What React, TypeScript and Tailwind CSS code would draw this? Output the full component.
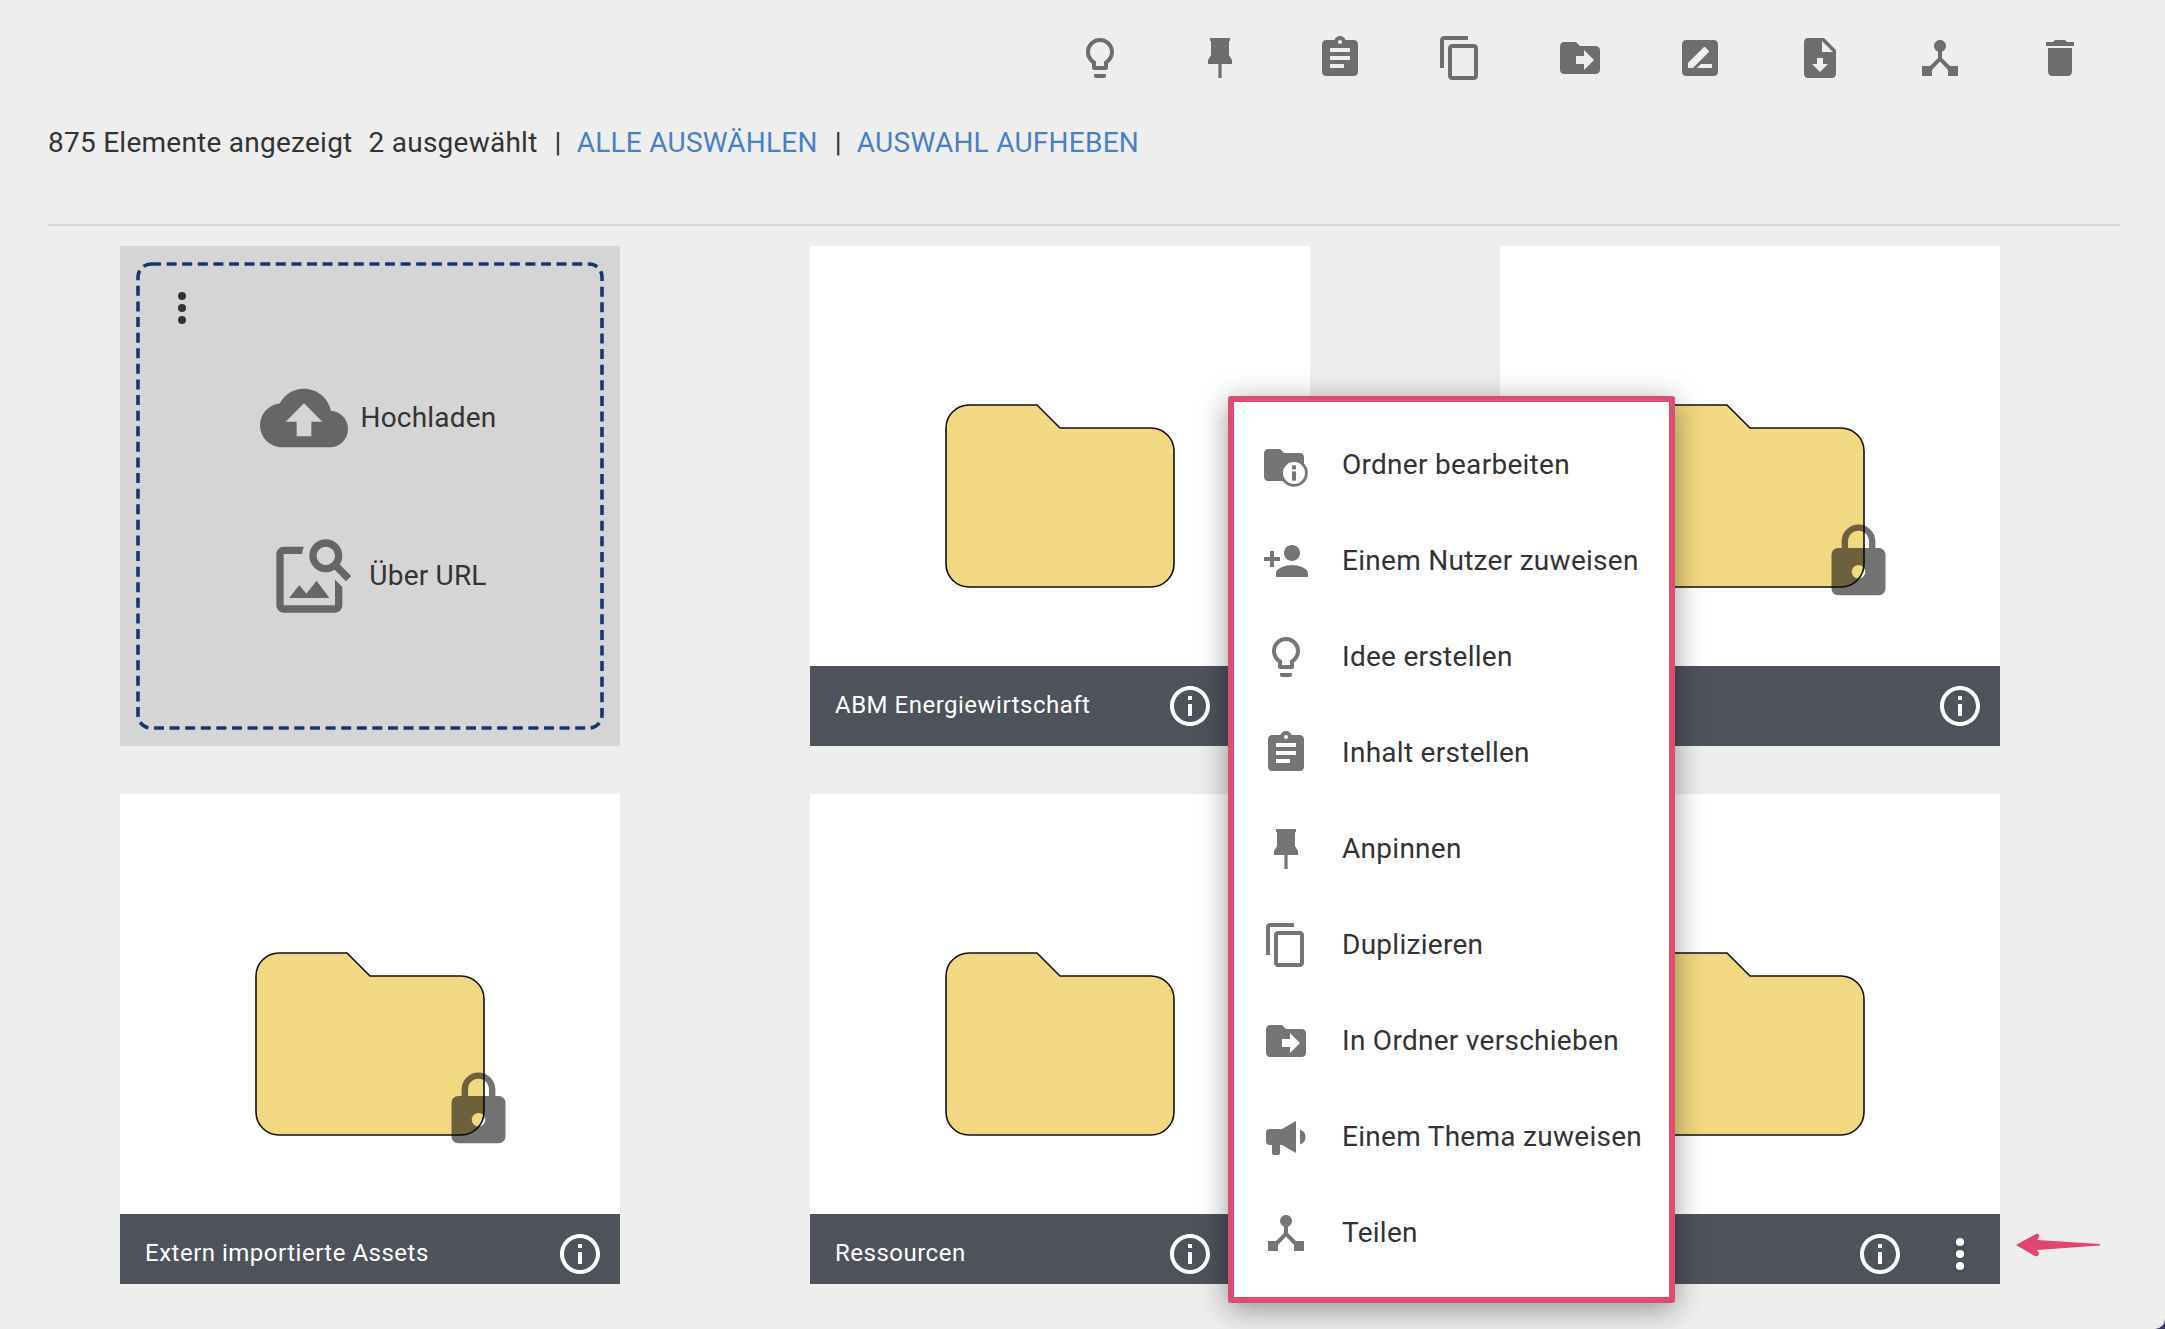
import type { ReactNode } from 'react';

const ICONS: Record<string, string> = {
  bulb: 'M9 21c0 .55.45 1 1 1h4c.55 0 1-.45 1-1v-1H9v1zm3-19C8.14 2 5 5.14 5 9c0 2.38 1.19 4.47 3 5.74V17c0 .55.45 1 1 1h6c.55 0 1-.45 1-1v-2.26c1.81-1.27 3-3.36 3-5.74 0-3.86-3.14-7-7-7zm2.85 11.1l-.85.6V16h-4v-2.3l-.85-.6C7.8 12.16 7 10.63 7 9c0-2.76 2.24-5 5-5s5 2.24 5 5c0 1.63-.8 3.16-2.15 4.1z',
  pin: 'M7 2h10v1.6h-.5V10.5L18 13v2h-5.2v7h-1.6v-7H6v-2l1.5-2.5V3.6H7z',
  clipboard: 'M19 3h-4.18C14.4 1.84 13.3 1 12 1c-1.3 0-2.4.84-2.82 2H5c-1.1 0-2 .9-2 2v14c0 1.1.9 2 2 2h14c1.1 0 2-.9 2-2V5c0-1.1-.9-2-2-2zm-7 0c.55 0 1 .45 1 1s-.45 1-1 1-1-.45-1-1 .45-1 1-1zm2 14H7v-2h7v2zm3-4H7v-2h10v2zm0-4H7V7h10v2z',
  copy: 'M16 1H4c-1.1 0-2 .9-2 2v14h2V3h12V1zm3 4H8c-1.1 0-2 .9-2 2v14c0 1.1.9 2 2 2h11c1.1 0 2-.9 2-2V7c0-1.1-.9-2-2-2zm0 16H8V7h11v14z',
  move: 'M20 6h-8l-2-2H4C2.9 4 2.01 4.9 2.01 6L2 18c0 1.1.9 2 2 2h16c1.1 0 2-.9 2-2V8c0-1.1-.9-2-2-2zm-6 12v-3h-4v-4h4V8l5 5-5 5z',
  note: 'M19 3H5c-1.1 0-2 .9-2 2v14c0 1.1.9 2 2 2h14c1.1 0 2-.9 2-2V5c0-1.1-.9-2-2-2zM6 17v-2.47l7.88-7.88c.2-.2.51-.2.71 0l1.77 1.77c.2.2.2.51 0 .71L8.47 17H6zm12 0h-7.5l2-2H18v2z',
  download: 'M14 2H6c-1.1 0-2 .9-2 2v16c0 1.1.9 2 2 2h12c1.1 0 2-.9 2-2V8l-6-6zm-2 17l-4-4h2.5v-3h3v3H16l-4 4zm1-10V3.5L18.5 9H13z',
  hub: 'M17 16l-4-4V8.82C14.16 8.4 15 7.3 15 6c0-1.66-1.34-3-3-3S9 4.34 9 6c0 1.3.84 2.4 2 2.82V12l-4 4H3v5h5v-3.05l4-4.2 4 4.2V21h5v-5h-4z',
  trash: 'M6 19c0 1.1.9 2 2 2h8c1.1 0 2-.9 2-2V7H6v12zM19 4h-3.5l-1-1h-5l-1 1H5v2h14V4z',
  personAdd: 'M15 12c2.21 0 4-1.79 4-4s-1.79-4-4-4-4 1.79-4 4 1.79 4 4 4zm-9-2V7H4v3H1v2h3v3h2v-3h3v-2H6zm9 4c-2.67 0-8 1.34-8 4v2h16v-2c0-2.66-5.33-4-8-4z',
  megaphone: 'M17 4l-7 4H4a2 2 0 0 0-2 2v4a2 2 0 0 0 2 2h1v4a1 1 0 0 0 1 1h2a1 1 0 0 0 1-1v-4h1l7 4zM19 8.2a4 4 0 0 1 0 7.6z',
  info: 'M11 7h2v2h-2zm0 4h2v6h-2zm1-9C6.48 2 2 6.48 2 12s4.48 10 10 10 10-4.48 10-10S17.52 2 12 2zm0 18c-4.41 0-8-3.59-8-8s3.59-8 8-8 8 3.59 8 8-3.59 8-8 8z',
  lock: 'M18 8h-1V6c0-2.76-2.24-5-5-5S7 3.24 7 6v2H6c-1.1 0-2 .9-2 2v10c0 1.1.9 2 2 2h12c1.1 0 2-.9 2-2V10c0-1.1-.9-2-2-2zm-6 9c-1.1 0-2-.9-2-2s.9-2 2-2 2 .9 2 2-.9 2-2 2zm3.1-9H8.9V6c0-1.71 1.39-3.1 3.1-3.1 1.71 0 3.1 1.39 3.1 3.1v2z',
  cloud: 'M19.35 10.04C18.67 6.59 15.64 4 12 4 9.11 4 6.6 5.64 5.35 8.04 2.34 8.36 0 10.91 0 14c0 3.31 2.69 6 6 6h13c2.76 0 5-2.24 5-5 0-2.64-2.05-4.78-4.65-4.96zM14 13v4h-4v-4H7l5-5 5 5h-3z',
  imageSearch: 'M18 13v7H4V6h5.02c.05-.71.22-1.38.48-2H4c-1.1 0-2 .9-2 2v14c0 1.1.9 2 2 2h14c1.1 0 2-.9 2-2v-5l-2-2zm-1.5 5h-11l2.75-3.53 1.96 2.36 2.75-3.54L16.5 18zm2.8-9.11c.44-.7.7-1.51.7-2.39C20 4.01 17.99 2 15.5 2S11 4.01 11 6.5s2.01 4.5 4.49 4.5c.88 0 1.7-.26 2.39-.7L21 13.42 22.42 12 19.3 8.89zM15.5 9C14.12 9 13 7.88 13 6.5S14.12 4 15.5 4 18 5.12 18 6.5 16.88 9 15.5 9z',
};

function Icon({ name, className }: { name: string; className: string }) {
  return (
    <svg viewBox="0 0 24 24" className={className} fill="currentColor">
      <path d={ICONS[name]} />
    </svg>
  );
}

function FolderInfoIcon() {
  return (
    <svg viewBox="0 0 24 24" className="h-12 w-12 shrink-0 text-[#757575]" fill="currentColor">
      <path d="M9 4H3C1.9 4 1.01 4.9 1.01 6L1 18c0 1.1.9 2 2 2h16c1.1 0 2-.9 2-2V8c0-1.1-.9-2-2-2h-8l-2-2z" />
      <circle cx="16" cy="16" r="6.2" fill="white" stroke="currentColor" strokeWidth="1.4" />
      <rect x="15" y="15.2" width="2" height="4.6" />
      <rect x="15" y="12.2" width="2" height="2" />
    </svg>
  );
}

function Kebab({ className }: { className: string }) {
  return (
    <svg viewBox="0 0 48 48" className={className} fill="currentColor">
      <circle cx="24" cy="12" r="4" />
      <circle cx="24" cy="24" r="4" />
      <circle cx="24" cy="36" r="4" />
    </svg>
  );
}

function Folder({ locked }: { locked?: boolean }) {
  return (
    <div className="relative h-[184px] w-[230px]">
      <svg viewBox="0 0 230 184" className="h-full w-full">
        <path
          d="M24 1H92L115 24H206A23 23 0 0 1 229 47V160A23 23 0 0 1 206 183H24A23 23 0 0 1 1 160V24A23 23 0 0 1 24 1Z"
          fill="#f2d882"
          stroke="#111"
          strokeWidth="1.6"
        />
      </svg>
      {locked && <Icon name="lock" className="absolute left-[183px] top-[117px] h-[81px] w-[81px] text-black opacity-55" />}
    </div>
  );
}

function Card({ title, locked, kebab, short }: { title?: string; locked?: boolean; kebab?: boolean; short?: boolean }) {
  return (
    <div className="flex w-[500px] flex-col bg-white">
      <div className="flex h-[420px] justify-center pt-[158px]">
        <Folder locked={locked} />
      </div>
      <div className={`flex items-center bg-[#4e525b] pl-[25px] pr-4 text-white ${short ? 'h-[70px] pt-[10px]' : 'h-[80px]'}`}>
        <span className="flex-1 pb-[2px] text-[24px] tracking-[0.5px]">{title}</span>
        <Icon name="info" className="h-12 w-12" />
        {kebab && <Kebab className="ml-8 h-12 w-12" />}
      </div>
    </div>
  );
}

function UploadCard() {
  return (
    <div className="relative h-[500px] w-[500px] bg-[#d5d5d5] p-[16px]">
      <svg className="absolute left-[16px] top-[16px] h-[468px] w-[468px]" viewBox="0 0 468 468" fill="none">
        <rect x="2" y="2" width="464" height="464" rx="13" stroke="#17376b" strokeWidth="3.6" strokeDasharray="10 5.6" />
      </svg>
      <div className="flex h-[468px] flex-col text-[28px] tracking-[0.2px] text-[#333]">
        <Kebab className="ml-[22px] mt-[22px] h-12 w-12" />
        <div className="mt-[42px] flex items-center justify-center pl-[16px]">
          <Icon name="cloud" className="h-[88px] w-[88px] text-[#666]" />
          <span className="ml-[13px]">Hochladen</span>
        </div>
        <div className="mt-[70px] flex items-center justify-center pl-[16px]">
          <Icon name="imageSearch" className="h-[88px] w-[88px] text-[#666]" />
          <span className="ml-[12px]">Über URL</span>
        </div>
      </div>
    </div>
  );
}

const TOOLBAR = ['bulb', 'pin', 'clipboard', 'copy', 'move', 'note', 'download', 'hub', 'trash'];

const MENU: Array<{ icon: ReactNode; label: string }> = [
  { icon: <FolderInfoIcon />, label: 'Ordner bearbeiten' },
  { icon: <Icon name="personAdd" className="h-12 w-12 shrink-0" />, label: 'Einem Nutzer zuweisen' },
  { icon: <Icon name="bulb" className="h-12 w-12 shrink-0" />, label: 'Idee erstellen' },
  { icon: <Icon name="clipboard" className="h-12 w-12 shrink-0" />, label: 'Inhalt erstellen' },
  { icon: <Icon name="pin" className="h-12 w-12 shrink-0" />, label: 'Anpinnen' },
  { icon: <Icon name="copy" className="h-12 w-12 shrink-0" />, label: 'Duplizieren' },
  { icon: <Icon name="move" className="h-12 w-12 shrink-0" />, label: 'In Ordner verschieben' },
  { icon: <Icon name="megaphone" className="h-12 w-12 shrink-0" />, label: 'Einem Thema zuweisen' },
  { icon: <Icon name="hub" className="h-12 w-12 shrink-0" />, label: 'Teilen' },
];

export default function App() {
  return (
    <div className="h-[1329px] w-[2165px] overflow-hidden bg-[#3a3560] font-['Roboto',sans-serif]">
      <div className="relative h-full w-full overflow-hidden rounded-br-[10px] bg-[#eeeeee] px-[48px]">
        <div className="flex justify-end gap-[72px] pr-[33px] pt-[34px] text-[#6e6e6e]">
          {TOOLBAR.map((name) => (
            <Icon key={name} name={name} className="h-12 w-12" />
          ))}
        </div>

        <div className="mt-[41px] flex h-[40px] items-center text-[28px] tracking-[0.25px] text-[#333]">
          <span>875 Elemente angezeigt</span>
          <span className="ml-[16px]">2 ausgewählt</span>
          <span className="ml-[17px]">|</span>
          <span className="ml-[15px] text-[#4a7fc7]">ALLE AUSWÄHLEN</span>
          <span className="ml-[17px]">|</span>
          <span className="ml-[15px] text-[#4a7fc7]">AUSWAHL AUFHEBEN</span>
        </div>

        <div className="mt-[61px] h-[2px] w-[2072px] bg-[#d5d5d5]" />

        <div className="ml-[72px] mt-[20px] grid grid-cols-[500px_500px_500px] gap-x-[190px] gap-y-[48px]">
          <UploadCard />
          <Card title="ABM Energiewirtschaft" kebab />
          <Card locked />
          <Card title="Extern importierte Assets" locked short />
          <Card title="Ressourcen" kebab short />
          <Card kebab short />
        </div>

        {/* Kontextmenü */}
        <div className="absolute left-[1228px] top-[396px] w-[447px] rounded-[3px] border-[6px] border-[#dc4d71] bg-white pb-[16px] pt-[15px] shadow-[0_6px_30px_rgba(0,0,0,0.4)]">
          {MENU.map((item) => (
            <div key={item.label} className="flex h-[96px] items-center pl-[28px] text-[#757575]">
              {item.icon}
              <span className="ml-[32px] whitespace-nowrap text-[28px] tracking-[0.28px] text-[#333]">{item.label}</span>
            </div>
          ))}
        </div>

        {/* Hinweispfeil */}
        <svg viewBox="0 0 90 30" className="absolute left-[2014px] top-[1230px] h-[30px] w-[90px]">
          <path d="M2 15L22 4Q26 3 25 7L23 10L86 14V15.5L23 20L25 23Q25 27 21 26Z" fill="#e0456e" />
        </svg>
      </div>
    </div>
  );
}
